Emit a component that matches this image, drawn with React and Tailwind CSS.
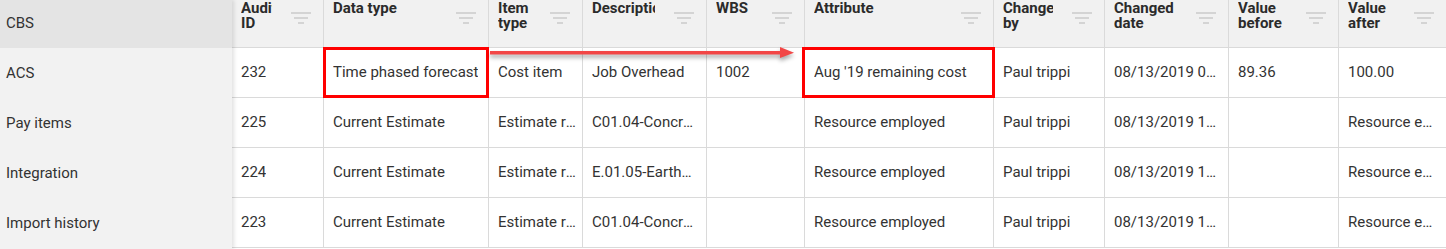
import React from 'react'

const NAV = ['CBS', 'ACS', 'Pay items', 'Integration', 'Import history']

const COLUMNS = [
  { key: 'id', label: 'Audit ID', w: 'w-[92px] pr-[4px]' },
  { key: 'dataType', label: 'Data type', w: 'w-[165px] pr-[4px]' },
  { key: 'itemType', label: 'Item type', w: 'w-[94px] pr-[4px]' },
  { key: 'desc', label: 'Description', w: 'w-[124px] pr-[9px]' },
  { key: 'wbs', label: 'WBS', w: 'w-[98px] pr-[4px]' },
  { key: 'attr', label: 'Attribute', w: 'w-[189px] pr-[4px]' },
  { key: 'by', label: 'Change by', w: 'w-[111px] pr-[4px]' },
  { key: 'date', label: 'Changed date', w: 'w-[124px] pr-[4px]' },
  { key: 'before', label: 'Value before', w: 'w-[110px] pr-[4px]' },
  { key: 'after', label: 'Value after', w: 'w-[108px] pr-[4px]' },
]

const ROWS = [
  { id: '232', dataType: 'Time phased forecast', itemType: 'Cost item', desc: 'Job Overhead', wbs: '1002', attr: "Aug '19 remaining cost", by: 'Paul trippi', date: '08/13/2019 09:42 AM', before: '89.36', after: '100.00' },
  { id: '225', dataType: 'Current Estimate', itemType: 'Estimate resource', desc: 'C01.04-Concrete Footings', wbs: '', attr: 'Resource employed', by: 'Paul trippi', date: '08/13/2019 10:15 AM', before: '', after: 'Resource employed' },
  { id: '224', dataType: 'Current Estimate', itemType: 'Estimate resource', desc: 'E.01.05-Earthwork', wbs: '', attr: 'Resource employed', by: 'Paul trippi', date: '08/13/2019 10:15 AM', before: '', after: 'Resource employed' },
  { id: '223', dataType: 'Current Estimate', itemType: 'Estimate resource', desc: 'C01.04-Concrete Footings', wbs: '', attr: 'Resource employed', by: 'Paul trippi', date: '08/13/2019 10:16 AM', before: '', after: 'Resource employed' },
]

function FilterIcon(){
  return (
    <svg width="20" height="12" viewBox="0 0 20 12" className="shrink-0 ml-[19px] mr-[12px] mt-[12px]">
      <rect x="0" y="0" width="20" height="2" fill="#d4d4d4" />
      <rect x="3" y="5" width="14" height="2" fill="#d4d4d4" />
      <rect x="7" y="10" width="6" height="2" fill="#d4d4d4" />
    </svg>
  )
}

export default function App(){
  return (
    <div className="flex w-[1446px] h-[249px] overflow-hidden bg-white text-[#333] font-['Roboto','Liberation_Sans',sans-serif]">
      <aside className="relative z-10 w-[232px] shrink-0 bg-[#f2f2f2] shadow-[2px_0_4px_rgba(0,0,0,0.12)]">
        <ul className="-mt-[2px]">
          {NAV.map((n, i) => (
            <li key={n} className={'h-[50px] flex items-center pl-[6px] text-[15px] ' + (i === 0 ? 'bg-[#e4e4e4]' : '')}>
              {n}
            </li>
          ))}
        </ul>
      </aside>

      <div className="relative flex-1 min-w-0">
        <div className="flex h-[48px] bg-[#f1f1f1] border-b border-[#dadada]">
          {COLUMNS.map(c => (
            <div key={c.key} className={c.w.split(' ')[0] + ' shrink-0 flex items-start pl-[9px] border-r border-[#dadada]'}>
              <div className="flex-1 min-w-0 overflow-hidden pt-[1px] text-[15px] font-bold leading-[15px] text-[#2b2b2b]">
                {c.label}
              </div>
              <FilterIcon />
            </div>
          ))}
        </div>

        {ROWS.map(r => (
          <div key={r.id} className="flex h-[50px] border-b border-[#dadada]">
            {COLUMNS.map(c => (
              <div key={c.key} className={c.w + ' shrink-0 flex items-center pl-[9px] border-r border-[#dadada] text-[15px]'}>
                <span className="truncate">{r[c.key]}</span>
              </div>
            ))}
          </div>
        ))}

        {/* annotation: highlighted cells and arrow */}
        <div className="absolute left-[91px] top-[47px] w-[166px] h-[51px] border-[3px] border-[#ff0000]" />
        <div className="absolute left-[570px] top-[47px] w-[193px] h-[51px] border-[3px] border-[#ff0000]" />
        <svg className="absolute left-[258px] top-[45px] drop-shadow-[0_3px_2px_rgba(0,0,0,0.35)]" width="306" height="16" viewBox="0 0 306 16">
          <rect x="0" y="6" width="292" height="3.5" fill="#f24646" />
          <polygon points="290,2 304,7.7 290,13" fill="#f24646" />
        </svg>
      </div>
    </div>
  )
}
